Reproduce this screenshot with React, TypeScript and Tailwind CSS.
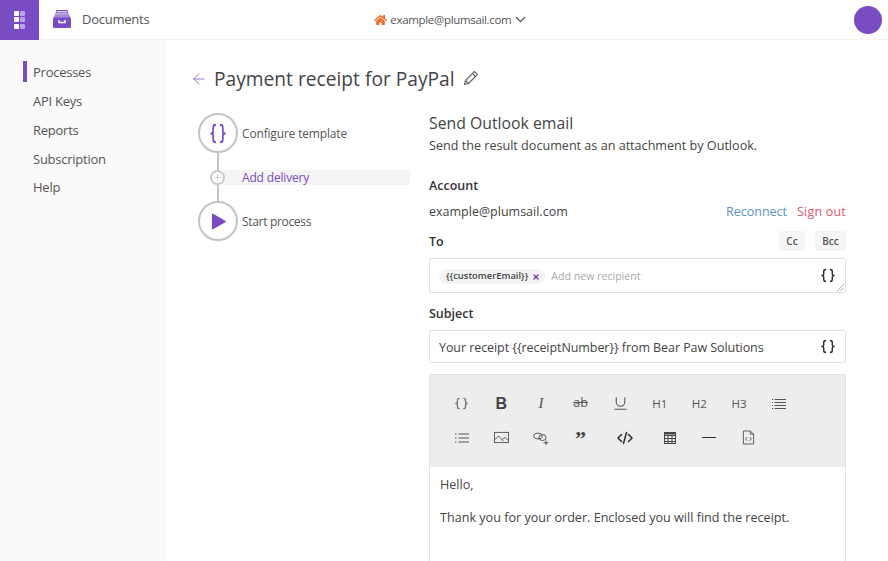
import React from "react";
import { ChevronDown, ArrowLeft, Plus, X, Underline } from "lucide-react";
import { FaHome } from "react-icons/fa";

const Braces = ({ className = "" }: { className?: string }) => (
  <svg viewBox="0 0 16 16" preserveAspectRatio="none" className={className} fill="none" stroke="currentColor" strokeWidth="1.5" strokeLinecap="round" strokeLinejoin="round">
    <path d="M5.5 2.5C4 2.5 3.7 3.2 3.7 4.5v2C3.7 7.4 3.1 8 2 8c1.1 0 1.7.6 1.7 1.5v2c0 1.3.3 2 1.8 2" />
    <path d="M10.5 2.5c1.5 0 1.8.7 1.8 2v2c0 .9.6 1.5 1.7 1.5-1.1 0-1.7.6-1.7 1.5v2c0 1.3-.3 2-1.8 2" />
  </svg>
);

const Tool = ({ children, className = "" }: { children: React.ReactNode; className?: string }) => (
  <div className={`w-[39.6px] h-[35px] flex items-center justify-center text-[#555] ${className}`}>{children}</div>
);

const ic = "w-[16px] h-[16px]";

const Lines = () => (
  <svg viewBox="0 0 16 16" className={ic} stroke="currentColor" strokeWidth="1.2" fill="none">
    <path d="M1 3.5h1.5M1 6.5h1.5M1 9.5h1.5M1 12.5h1.5" strokeDasharray="1 0.5" />
    <path d="M3.5 3.5H15M3.5 6.5H15M3.5 9.5H15M3.5 12.5H15" />
  </svg>
);

const OrderedLines = () => (
  <svg viewBox="0 0 16 16" className={ic} stroke="currentColor" strokeWidth="1.2" fill="none">
    <path d="M1 4h2M1 8h2M1 12h2" strokeDasharray="1 0.5" />
    <path d="M4.5 4H15M4.5 8H15M4.5 12H15" />
  </svg>
);

export default function App() {
  return (
    <div className="w-[888px] h-[561px] overflow-hidden bg-white text-[#444] text-[13px] font-['Open_Sans','Noto_Sans',sans-serif] flex flex-col">
      <header className="h-[40px] shrink-0 flex items-center border-b border-[#f3f3f3]">
        <div className="w-[39px] h-[40px] bg-[#7a4cc4] flex items-center justify-center">
          <div className="grid grid-cols-2 gap-[1.5px]">
            <span className="w-[5px] h-[5px] rounded-[1px] bg-white" />
            <span className="w-[5px] h-[5px] rounded-[1px] bg-[#b9a3e3]" />
            <span className="w-[5px] h-[5px] rounded-[1px] bg-white" />
            <span className="w-[5px] h-[5px] rounded-[1px] bg-[#b9a3e3]" />
            <span className="w-[5px] h-[5px] rounded-[1px] bg-white" />
            <span className="w-[5px] h-[5px] rounded-[1px] bg-[#b9a3e3]" />
          </div>
        </div>
        <svg viewBox="0 0 20 20" className="w-[20px] h-[20px] ml-[13px] mb-[1px]">
          <path d="M4.5 1h11l1.3 4.5H3.2z" fill="#7a4cc4" />
          <path d="M4.8 2.6h10.4M4.2 4.2h11.6" stroke="#fff" strokeWidth="0.8" />
          <path d="M3 5.5h14l2 3.5H1z" fill="#a98ad9" />
          <rect x="1" y="8.5" width="18" height="10.5" rx="1.5" fill="#7a4cc4" />
          <path d="M7 11v2.5h6V11" stroke="#fff" strokeWidth="1.4" fill="none" />
        </svg>
        <span className="ml-[10px] text-[#555] text-[13px] tracking-[-0.25px]">Documents</span>
        <div className="ml-[225px] flex items-center text-[#555] text-[11.5px] tracking-[-0.33px]">
          <FaHome className="w-[13px] h-[12px] text-[#e8702a] mr-[3px]" />
          <span>example@plumsail.com</span>
          <ChevronDown className="w-[17px] h-[17px] ml-[1px] text-[#444]" strokeWidth={1.8} />
        </div>
        <div className="ml-auto mr-[6px] w-[28px] h-[28px] rounded-full bg-[#7a4cc4]" />
      </header>

      <div className="flex flex-1 min-h-0">
        <nav className="w-[167px] shrink-0 bg-[#fafafa] pt-[18px] pl-[23px] text-[#555] text-[13px] tracking-[-0.25px]">
          <div className="h-[29px] flex items-center relative pl-[10px]">
            <span className="absolute left-0 top-[3px] w-[4px] h-[21px] bg-[#7a4cc4]" />
            Processes
          </div>
          <div className="h-[29px] flex items-center pl-[10px]">API Keys</div>
          <div className="h-[29px] flex items-center pl-[10px]">Reports</div>
          <div className="h-[29px] flex items-center pl-[10px]">Subscription</div>
          <div className="h-[28px] flex items-center pl-[10px]">Help</div>
        </nav>

        <main className="flex-1 pl-[25px] min-w-0">
          <div className="h-[30px] mt-[24px] flex items-center">
            <ArrowLeft className="-ml-[2px] w-[18px] h-[18px] text-[#8f6bd0]" strokeWidth={1.2} />
            <h1 className="ml-[6px] text-[19.2px] text-[#444] leading-none">Payment receipt for PayPal</h1>
            <svg viewBox="0 0 16 16" className="ml-[8px] w-[16px] h-[16px] text-[#666] -mt-[2px]" fill="none" stroke="currentColor" strokeWidth="1.1" strokeLinejoin="round">
              <path d="M1.5 14.5l1-4L11.5 1.5l3 3-9 9z" />
              <path d="M9.5 3.5l3 3M2.5 10.5l3 3" />
            </svg>
          </div>

          <div className="flex mt-[19px]">
            <div className="w-[218px] shrink-0 pl-[6px] text-[12px] tracking-[-0.17px] text-[#555]">
              <div className="flex items-center">
                <div className="w-[40px] h-[40px] rounded-full border-2 border-[#c4c4c4] flex items-center justify-center text-[#7a4cc4]">
                  <Braces className="w-[18px] h-[25px]" />
                </div>
                <span className="ml-[4px] pt-[1px]">Configure template</span>
              </div>
              <div className="ml-[19px] w-[2px] h-[17px] bg-[#c4c4c4]" />
              <div className="flex items-center h-[15px]">
                <div className="ml-[12px] w-[15px] h-[15px] rounded-full border-2 border-[#c9c9c9] bg-white flex items-center justify-center shrink-0 z-10">
                  <Plus className="w-[9px] h-[9px] text-[#bbb]" strokeWidth={2} />
                </div>
                <div className="flex-1 h-[15px] -ml-[1px] bg-[#f5f5f5] pl-[18px] flex items-center text-[#7a4cc4]">Add delivery</div>
              </div>
              <div className="ml-[19px] w-[2px] h-[17px] bg-[#c4c4c4]" />
              <div className="flex items-center -mt-[1px]">
                <div className="w-[40px] h-[40px] rounded-full border-2 border-[#c4c4c4] flex items-center justify-center">
                  <svg viewBox="0 0 16 18" className="w-[15px] h-[17px] ml-[1px]"><path d="M1 1.5v15a.8.8 0 0 0 1.2.7l13-7.5a.8.8 0 0 0 0-1.4L2.2.8A.8.8 0 0 0 1 1.5z" fill="#7a4cc4" /></svg>
                </div>
                <span className="ml-[4px] pt-[1px] tracking-[-0.32px]">Start process</span>
              </div>
            </div>

            <section className="ml-[19px] w-[417px] shrink-0">
              <h2 className="text-[15.8px] leading-[20px] text-[#444]">Send Outlook email</h2>
              <p className="text-[12.6px] leading-[20px] mt-[3px] text-[#444]">Send the result document as an attachment by Outlook.</p>
              <div className="mt-[20px] font-semibold text-[12.5px] leading-[20px] text-[#333]">Account</div>
              <div className="mt-[6px] flex items-center justify-between h-[20px] text-[12.5px]">
                <span>example@plumsail.com</span>
                <span className="flex items-center gap-[10px]">
                  <span className="text-[#5b93c7]">Reconnect</span>
                  <span className="text-[#e0556f] tracking-[0.2px]">Sign out</span>
                </span>
              </div>
              <div className="mt-[9px] h-[20px] flex items-center justify-between">
                <span className="font-semibold text-[12.5px] text-[#333] pt-[2px]">To</span>
                <span className="flex gap-[10px] text-[10px] font-semibold text-[#555]">
                  <span className="w-[26px] h-[20px] rounded-[3px] bg-[#f5f5f5] flex items-center justify-center">Cc</span>
                  <span className="w-[31px] h-[20px] rounded-[3px] bg-[#f5f5f5] flex items-center justify-center">Bcc</span>
                </span>
              </div>
              <div className="relative mt-[7px] h-[35px] border border-[#e2e2e2] rounded-[2px] flex items-center pl-[9px] pr-[9px]">
                <span className="h-[15px] rounded-full bg-[#f3f3f3] pl-[7px] pr-[5px] flex items-center text-[9.4px] font-semibold text-[#444] mt-[2px]">
                  {"{{customerEmail}}"}
                  <X className="w-[8px] h-[8px] ml-[4px] text-[#6a3fb8]" strokeWidth={4} />
                </span>
                <span className="ml-[6px] text-[10.6px] text-[#aaa] mt-[2px]">Add new recipient</span>
                <Braces className="ml-auto w-[16px] h-[17px] text-[#333]" />
                <svg viewBox="0 0 8 8" className="absolute right-[1px] bottom-[1px] w-[8px] h-[8px]" stroke="#999" strokeWidth="0.8"><path d="M1 8L8 1M4.5 8L8 4.5" /></svg>
              </div>
              <div className="mt-[11px] h-[20px] font-semibold text-[12.5px] leading-[20px] text-[#333]">Subject</div>
              <div className="mt-[6px] h-[33px] border border-[#e2e2e2] rounded-[2px] flex items-center pl-[9px] pr-[9px] text-[12.5px] tracking-[-0.07px]">
                <span className="pt-[3px]">{"Your receipt {{receiptNumber}} from Bear Paw Solutions"}</span>
                <Braces className="ml-auto w-[16px] h-[17px] text-[#333]" />
              </div>
              <div className="mt-[11px] h-[200px] border border-[#e2e2e2] rounded-[2px]">
                <div className="h-[92px] bg-[#ededed] pl-[12px] pt-[11px]">
                  <div className="flex h-[35px]">
                    <Tool><Braces className="w-[15px] h-[15px] text-[#777]" /></Tool>
                    <Tool><span className="text-[16px] font-bold text-[#444] font-['Liberation_Sans',sans-serif]">B</span></Tool>
                    <Tool><span className="text-[15px] italic font-['Liberation_Serif',serif] text-[#555]">I</span></Tool>
                    <Tool><span className="text-[12.5px] line-through leading-none">ab</span></Tool>
                    <Tool><Underline className="w-[17px] h-[17px]" strokeWidth={1.5} /></Tool>
                    <Tool className="text-[11.5px]">H1</Tool>
                    <Tool className="text-[11.5px]">H2</Tool>
                    <Tool className="text-[11.5px]">H3</Tool>
                    <Tool><Lines /></Tool>
                  </div>
                  <div className="flex h-[35px] -mt-[1px]">
                    <Tool><OrderedLines /></Tool>
                    <Tool>
                      <svg viewBox="0 0 16 14" className="w-[15px] h-[13px]" fill="none" stroke="currentColor" strokeWidth="1"><rect x="0.5" y="1.5" width="15" height="11" /><path d="M1 9l4-3.5 5 5.5M9 9l3-2 3 3" /></svg>
                    </Tool>
                    <Tool>
                      <svg viewBox="0 0 16 16" className={ic} fill="none" stroke="currentColor" strokeWidth="1"><ellipse cx="5" cy="6" rx="4.2" ry="2.8" /><ellipse cx="9.5" cy="7.5" rx="3.5" ry="3" /><path d="M13 10.5v4.5M10.5 12.75h5" /></svg>
                    </Tool>
                    <Tool><span className="text-[22px] font-bold leading-none h-[18px] -mt-[2px] text-[#444] font-['Liberation_Serif',serif]">”</span></Tool>
                    <Tool className="ml-[5px]">
                      <svg viewBox="0 0 16 16" className={ic} fill="none" stroke="#333" strokeWidth="1.6" strokeLinecap="round" strokeLinejoin="round"><path d="M4.5 4.5L1 8l3.5 3.5M11.5 4.5L15 8l-3.5 3.5M9.5 2.5l-3 11" /></svg>
                    </Tool>
                    <Tool className="ml-[5px]">
                      <svg viewBox="0 0 12 12" className="w-[12px] h-[12px]" fill="none" stroke="#444" strokeWidth="1"><rect x="0.5" y="0.5" width="11" height="11" /><path d="M0 3.5h12M0 6.5h12M0 9.5h12M4 3v9M8 3v9" /><path d="M0 1.5h12" strokeWidth="2" /></svg>
                    </Tool>
                    <Tool><div className="w-[14px] h-[1.5px] bg-[#333]" /></Tool>
                    <Tool>
                      <svg viewBox="0 0 14 16" className="w-[13px] h-[15px]" fill="none" stroke="currentColor" strokeWidth="1"><path d="M1.5 1h7.5L12.5 4.5V15h-11z" /><path d="M9 1v3.5h3.5" /><path d="M5.5 7.5L4 9.5l1.5 2M8.5 7.5L10 9.5l-1.5 2" /></svg>
                    </Tool>
                  </div>
                </div>
                <div className="pl-[10px] pt-[8px] text-[12.6px] leading-[20px]">
                  <p>Hello,</p>
                  <p className="mt-[13px]">Thank you for your order. Enclosed you will find the receipt.</p>
                </div>
              </div>
            </section>
          </div>
        </main>
      </div>
    </div>
  );
}
